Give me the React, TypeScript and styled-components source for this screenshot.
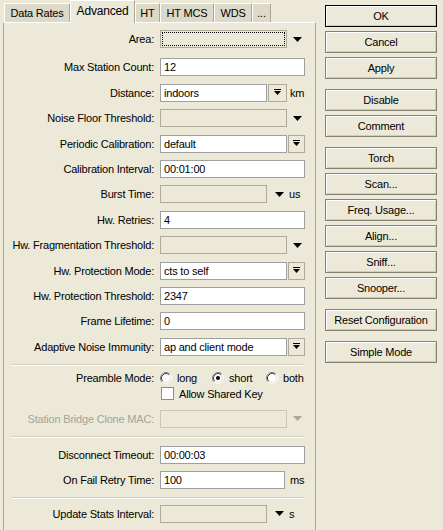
import React from 'react'
import styled, { createGlobalStyle } from 'styled-components'

const GlobalStyle = createGlobalStyle`
  html, body {
    margin: 0;
    padding: 0;
    background: #ECE9D8;
  }
  body {
    font-family: 'Liberation Sans', Arial, sans-serif;
    font-size: 11px;
    letter-spacing: -0.2px;
    color: #000;
  }
  * { box-sizing: border-box; }
`

const Window = styled.div`
  display: flex;
  width: 443px;
  height: 530px;
  overflow: hidden;
  background: #ECE9D8;
`

// left side: tabs + form panel
const TabArea = styled.div`
  width: 316px;
  padding-left: 3px;
  display: flex;
  flex-direction: column;
`

const TabStrip = styled.div`
  display: flex;
  align-items: flex-end;
  height: 25px;
  padding-left: 1px;
  margin-bottom: -1px;
  position: relative;
  z-index: 1;
`

const Tab = styled.div<{ $active?: boolean; $w: number }>`
  width: ${({ $w }) => $w}px;
  height: ${({ $active }) => ($active ? 23 : 19)}px;
  margin-bottom: ${({ $active }) => ($active ? 0 : 1)}px;
  display: flex;
  align-items: center;
  justify-content: center;
  padding-bottom: ${({ $active }) => ($active ? 2 : 0)}px;
  background: ${({ $active }) => ($active ? '#ECE9D8' : '#DCD9C9')};
  border-top: 1px solid #FFFFFF;
  border-left: 1px solid #FFFFFF;
  border-right: 1px solid #A9A698;
  font-size: ${({ $active }) => ($active ? 12 : 11)}px;
  white-space: nowrap;
`

const Panel = styled.div`
  min-height: 540px;
  background: #ECE9D8;
  border: 1px solid #A9A698;
  border-top-color: #FFFFFF;
  padding-top: 7px;
  display: flex;
  flex-direction: column;
`

const Row = styled.div<{ $top?: number; $h?: number }>`
  display: flex;
  align-items: center;
  height: ${({ $h }) => $h ?? 18}px;
  margin-top: ${({ $top }) => $top ?? 7.4}px;
`

const Label = styled.div<{ $disabled?: boolean }>`
  width: 150px;
  margin-right: 6px;
  text-align: right;
  white-space: nowrap;
  color: ${({ $disabled }) => ($disabled ? '#A6A396' : '#000')};
`

const Field = styled.div<{ $w: number; $disabled?: boolean; $faint?: boolean; $focus?: boolean }>`
  width: ${({ $w }) => $w}px;
  height: 18px;
  padding: 0 3px;
  line-height: 16px;
  white-space: nowrap;
  overflow: hidden;
  border: 1px solid ${({ $disabled, $faint }) => ($faint ? '#CAC7B9' : $disabled ? '#ADAA9C' : '#9F9F9F')};
  background: ${({ $disabled }) => ($disabled ? '#ECE9D8' : '#FFFFFF')};
  outline: ${({ $focus }) => ($focus ? '1px dotted #000' : 'none')};
  outline-offset: -3px;
`

const ComboButton = styled.div<{ $w: number }>`
  width: ${({ $w }) => $w}px;
  height: 18px;
  margin-left: 1px;
  border: 1px solid #ADAA9C;
  background: #ECE9D8;
  display: flex;
  align-items: center;
  justify-content: center;
`

const Arrow = styled.svg<{ $ml: number }>`
  margin-left: ${({ $ml }) => $ml}px;
  flex: none;
`

const Unit = styled.span<{ $ml: number }>`
  margin-left: ${({ $ml }) => $ml}px;
  white-space: nowrap;
`

const Separator = styled.div<{ $after?: number }>`
  height: 2px;
  margin: 8px 11px ${({ $after }) => $after ?? 0}px 8px;
  border-top: 1px solid #D3D0C1;
  border-bottom: 1px solid #FFFFFF;
`

const RadioOption = styled.div<{ $w?: number }>`
  display: flex;
  align-items: center;
  gap: 5px;
  width: ${({ $w }) => ($w ? `${$w}px` : 'auto')};
  white-space: nowrap;
`

const CheckBox = styled.div`
  width: 13px;
  height: 13px;
  background: #FFFFFF;
  border: 1px solid #8C8C8C;
  margin-left: 1px;
  margin-right: 5px;
`

// right side: button column
const ButtonColumn = styled.div`
  display: flex;
  flex-direction: column;
  padding: 5px 0 0 9px;
`

const Button = styled.div<{ $primary?: boolean; $top?: number }>`
  width: 112px;
  height: 22px;
  margin-top: ${({ $top }) => $top ?? 4}px;
  display: flex;
  align-items: center;
  justify-content: center;
  background: #ECE9D8;
  border: 1px solid ${({ $primary }) => ($primary ? '#000000' : '#85826F')};
  box-shadow: inset 1px 1px #FFFFFF, inset -1px -1px #CFCCBD;
  white-space: nowrap;
`

const DownArrow = ({ ml, color = '#000' }: { ml: number; color?: string }) => (
  <Arrow $ml={ml} width="9" height="5" viewBox="0 0 9 5">
    <polygon points="0,0 9,0 4.5,5" fill={color} />
  </Arrow>
)

const ComboIcon = () => (
  <svg width="7" height="7" viewBox="0 0 7 7">
    <rect x="0" y="0" width="7" height="1" fill="#000" />
    <polygon points="0,2 7,2 3.5,6" fill="#000" />
  </svg>
)

const Radio = ({ checked }: { checked?: boolean }) => (
  <svg width="12" height="12" viewBox="0 0 12 12">
    <circle cx="6" cy="6" r="5" fill="#FFFFFF" />
    <path d="M2.11 9.89 A5.5 5.5 0 0 1 9.89 2.11" stroke="#808080" fill="none" />
    <path d="M2.82 9.18 A4.5 4.5 0 0 1 9.18 2.82" stroke="#404040" fill="none" />
    <path d="M9.89 2.11 A5.5 5.5 0 0 1 2.11 9.89" stroke="#FFFFFF" fill="none" />
    <path d="M9.18 2.82 A4.5 4.5 0 0 1 2.82 9.18" stroke="#E4E1D3" fill="none" />
    {checked && <circle cx="6" cy="6" r="2" fill="#000" />}
  </svg>
)

const tabs = [
  { name: 'Data Rates', w: 66 },
  { name: 'Advanced', w: 65, active: true },
  { name: 'HT', w: 25 },
  { name: 'HT MCS', w: 54 },
  { name: 'WDS', w: 38 },
  { name: '...', w: 19 },
]

const buttons: { text: string; top?: number; primary?: boolean }[] = [
  { text: 'OK', top: 0, primary: true },
  { text: 'Cancel' },
  { text: 'Apply' },
  { text: 'Disable', top: 10 },
  { text: 'Comment' },
  { text: 'Torch', top: 10 },
  { text: 'Scan...' },
  { text: 'Freq. Usage...' },
  { text: 'Align...' },
  { text: 'Sniff...' },
  { text: 'Snooper...' },
  { text: 'Reset Configuration', top: 10 },
  { text: 'Simple Mode', top: 10 },
]

const TextRow = ({ label, value, top }: { label: string; value: string; top?: number }) => (
  <Row $top={top}>
    <Label>{label}</Label>
    <Field $w={145}>{value}</Field>
  </Row>
)

const ComboRow = ({ label, value }: { label: string; value: string }) => (
  <Row>
    <Label>{label}</Label>
    <Field $w={127}>{value}</Field>
    <ComboButton $w={17}>
      <ComboIcon />
    </ComboButton>
  </Row>
)

const EmptyDropRow = ({ label, top, focus }: { label: string; top?: number; focus?: boolean }) => (
  <Row $top={top}>
    <Label>{label}</Label>
    <Field $w={127} $disabled $focus={focus} />
    <DownArrow ml={6} />
  </Row>
)

const UnitDropRow = ({ label, unit, top }: { label: string; unit: string; top?: number }) => (
  <Row $top={top}>
    <Label>{label}</Label>
    <Field $w={107} $disabled />
    <DownArrow ml={8} />
    <Unit $ml={5}>{unit}</Unit>
  </Row>
)

export default function App() {
  return (
    <>
      <GlobalStyle />
      <Window>
        <TabArea>
          <TabStrip>
            {tabs.map((t) => (
              <Tab key={t.name} $w={t.w} $active={t.active}>
                {t.name}
              </Tab>
            ))}
          </TabStrip>
          <Panel>
            <EmptyDropRow label="Area:" top={0} focus />
            <TextRow label="Max Station Count:" value="12" top={10.4} />
            <Row>
              <Label>Distance:</Label>
              <Field $w={107}>indoors</Field>
              <ComboButton $w={19}>
                <ComboIcon />
              </ComboButton>
              <Unit $ml={3}>km</Unit>
            </Row>
            <EmptyDropRow label="Noise Floor Threshold:" />
            <ComboRow label="Periodic Calibration:" value="default" />
            <TextRow label="Calibration Interval:" value="00:01:00" />
            <UnitDropRow label="Burst Time:" unit="us" />
            <TextRow label="Hw. Retries:" value="4" />
            <EmptyDropRow label="Hw. Fragmentation Threshold:" />
            <ComboRow label="Hw. Protection Mode:" value="cts to self" />
            <TextRow label="Hw. Protection Threshold:" value="2347" />
            <TextRow label="Frame Lifetime:" value="0" />
            <ComboRow label="Adaptive Noise Immunity:" value="ap and client mode" />

            <Separator $after={4} />
            <Row $top={0} $h={16}>
              <Label>Preamble Mode:</Label>
              <RadioOption $w={52}>
                <Radio />
                long
              </RadioOption>
              <RadioOption $w={54}>
                <Radio checked />
                short
              </RadioOption>
              <RadioOption>
                <Radio />
                both
              </RadioOption>
            </Row>
            <Row $top={0} $h={16}>
              <Label />
              <CheckBox />
              Allow Shared Key
            </Row>
            <Row $top={8}>
              <Label $disabled>Station Bridge Clone MAC:</Label>
              <Field $w={127} $disabled $faint />
              <DownArrow ml={6} color="#ACA899" />
            </Row>

            <Separator $after={8} />
            <TextRow label="Disconnect Timeout:" value="00:00:03" top={0} />
            <Row $top={7}>
              <Label>On Fail Retry Time:</Label>
              <Field $w={125}>100</Field>
              <Unit $ml={5}>ms</Unit>
            </Row>

            <Separator $after={6} />
            <UnitDropRow label="Update Stats Interval:" unit="s" top={0} />
          </Panel>
        </TabArea>

        <ButtonColumn>
          {buttons.map((b) => (
            <Button key={b.text} $top={b.top} $primary={b.primary}>
              {b.text}
            </Button>
          ))}
        </ButtonColumn>
      </Window>
    </>
  )
}
